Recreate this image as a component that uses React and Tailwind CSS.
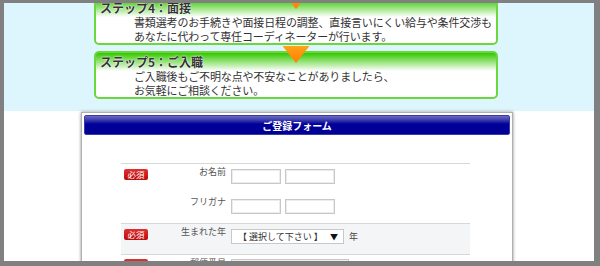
import React from "react";

function Triangle() {
  return (
    <svg
      className="absolute left-1/2 -translate-x-1/2 -top-[7px]"
      width="27"
      height="17"
      viewBox="0 0 27 17"
    >
      <defs>
        <linearGradient id="og" x1="0" y1="0" x2="0" y2="1">
          <stop offset="0" stopColor="#ffa31a" />
          <stop offset="1" stopColor="#ff7d00" />
        </linearGradient>
      </defs>
      <polygon points="0,0 27,0 13.5,17" fill="url(#og)" />
    </svg>
  );
}

function StepBox({ title, lines }) {
  return (
    <div className="relative h-[48px] rounded-[5px] border-2 border-[#6ad83c] bg-[linear-gradient(to_bottom,#33c800_0px,#8fe070_8px,#ffffff_18px)] px-[4px] pt-[2px]">
      <Triangle />
      <div className="text-[12px] font-bold leading-[14px] text-[#333] [text-shadow:0_0_2px_#ffffff,0_0_1px_#ffffff]">
        {title}
      </div>
      <div className="ml-[34px] whitespace-nowrap text-[11px] leading-[14px] tracking-[-0.15px] text-[#333]">
        {lines.map((l) => (
          <div key={l}>{l}</div>
        ))}
      </div>
    </div>
  );
}

function Badge() {
  return (
    <div className="flex h-[11px] w-[24px] items-center justify-center rounded-[2px] bg-[linear-gradient(to_bottom,#e03030,#bb0a0a)] text-[8.5px] leading-[11px] text-white">
      必須
    </div>
  );
}

function Input({ w = "w-[50px]" }) {
  return (
    <div className={`${w} h-[15px] border border-[#c8c8c8] bg-white shadow-[inset_0_0_0_1px_#ececec]`} />
  );
}

export default function App() {
  return (
    <div className="h-[266px] w-[600px] overflow-hidden bg-[#808080] pb-[5px] pl-[4px] pr-[6px] pt-[3px] font-['Noto_Sans_CJK_JP','Noto_Sans',sans-serif]">
      <div className="h-full overflow-hidden bg-white">
        <div className="h-[108px] overflow-hidden bg-[#ddf5fc]">
          <div className="-mt-[6px] ml-[90px] flex w-[404px] flex-col gap-[6px]">
            <StepBox
              title="ステップ4：面接"
              lines={[
                "書類選考のお手続きや面接日程の調整、直接言いにくい給与や条件交渉も",
                "あなたに代わって専任コーディネーターが行います。",
              ]}
            />
            <StepBox
              title="ステップ5：ご入職"
              lines={[
                "ご入職後もご不明な点や不安なことがありましたら、",
                "お気軽にご相談ください。",
              ]}
            />
          </div>
        </div>

        <div className="ml-[77px] mt-[1px] h-[200px] w-[432px] border border-[#b0b0b0] bg-white p-[2px] shadow-[0_0_3px_rgba(0,0,0,0.45)]">
          <div className="flex h-[20px] items-center justify-center rounded-[2px] border border-[#3a3aa8] bg-[linear-gradient(to_bottom,#6a6ac4_0px,#3c3cae_4px,#00009a_8px,#000094_100%)] pt-[1px] text-[10px] font-bold leading-[12px] text-white">
            ご登録フォーム
          </div>

          <div className="ml-[37px] mt-[28px] w-[349px] text-[9px] text-[#555]">
            <div className="border-t border-[#d8d8d8]">
              <div className="flex h-[30px]">
                <div className="w-[50px] pl-[3px] pt-[5px]">
                  <Badge />
                </div>
                <div className="w-[55px] pt-[2px] text-right leading-[11px]">お名前</div>
                <div className="flex gap-[4px] pl-[5px] pt-[5px]">
                  <Input />
                  <Input />
                </div>
              </div>
              <div className="flex h-[29px]">
                <div className="w-[50px]" />
                <div className="w-[55px] pt-[2px] text-right leading-[11px]">フリガナ</div>
                <div className="flex gap-[4px] pl-[5px] pt-[5px]">
                  <Input />
                  <Input />
                </div>
              </div>
            </div>

            <div className="flex h-[31px] border-t border-[#d8d8d8] bg-[#f4f5f7]">
              <div className="w-[50px] pl-[3px] pt-[5px]">
                <Badge />
              </div>
              <div className="w-[55px] pt-[2px] text-right leading-[11px]">生まれた年</div>
              <div className="flex items-center gap-[5px] self-start pl-[5px] pt-[5px]">
                <div className="flex h-[15px] w-[113px] items-center justify-between border border-[#c8c8c8] bg-white pl-[6px] pr-[5px] text-[9px] leading-[13px] text-[#333]">
                  <span>【 選択して下さい 】</span>
                  <span className="text-[8px] text-[#111]">▼</span>
                </div>
                <span className="text-[9px] text-[#444]">年</span>
              </div>
            </div>

            <div className="flex h-[30px] border-t border-[#d8d8d8]">
              <div className="w-[50px] pl-[3px] pt-[4px]">
                <Badge />
              </div>
              <div className="w-[55px] pt-[2px] text-right leading-[11px]">郵便番号</div>
              <div className="pl-[5px] pt-[4px]">
                <Input w="w-[118px]" />
              </div>
            </div>
          </div>
        </div>
      </div>
    </div>
  );
}
